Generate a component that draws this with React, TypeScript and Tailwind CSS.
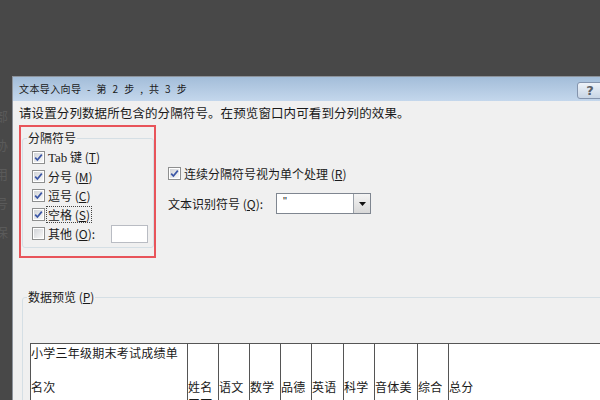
import React from "react";

function CB({ checked }: { checked: boolean }) {
  return (
    <span className="w-[13px] h-[13px] shrink-0 border border-[#8e8f8f] bg-white p-[1px] flex">
      <span className="flex-1 flex items-center justify-center bg-gradient-to-br from-[#d2d4d8] to-[#f8f8f8]">
        {checked && (
          <svg width="9" height="9" viewBox="0 0 9 9">
            <path d="M1.2 4.6 L3.4 7 L7.8 1.6" stroke="#3b56a6" strokeWidth="1.7" fill="none" />
          </svg>
        )}
      </span>
    </span>
  );
}

const cols: { w: string; lines: string[] }[] = [
  { w: "w-[157px]", lines: ["小学三年级期末考试成绩单", "", "名次", "1"] },
  { w: "w-[31px]", lines: ["", "", "姓名", "王丁"] },
  { w: "w-[31px]", lines: ["", "", "语文", "110"] },
  { w: "w-[31px]", lines: ["", "", "数学", "111"] },
  { w: "w-[31px]", lines: ["", "", "品德", "100"] },
  { w: "w-[32px]", lines: ["", "", "英语", "75"] },
  { w: "w-[31px]", lines: ["", "", "科学", "9"] },
  { w: "w-[43px]", lines: ["", "", "音体美", "98"] },
  { w: "w-[31px]", lines: ["", "", "综合", "47"] },
  { w: "w-[200px]", lines: ["", "", "总分", "770"] },
];

export default function App() {
  return (
    <div className="relative w-[600px] h-[400px] overflow-hidden bg-[#484848] font-['Noto_Sans_CJK_SC',sans-serif] text-[#1a1a1a]">
      {/* faint text behind the dialog */}
      <div className="absolute left-[-5px] top-[101px] flex flex-col text-[13px] leading-[29px] text-[#5a5a5a]">
        <span>部</span>
        <span>协</span>
        <span>用</span>
        <span>号</span>
        <span>保</span>
      </div>

      <div className="relative flex flex-col h-full pt-[76px] pl-[12px]">
        <div className="w-[610px] flex-1 flex flex-col bg-[#f0f0f0] border-t border-l border-[#8d939b]">
          {/* title bar */}
          <div className="h-[24px] flex items-start bg-gradient-to-b from-[#a3bdd9] to-[#c4d7ec]">
            <span className="pl-[6px] mt-[5px] text-[10px] leading-[14px] tracking-[0.4px] [word-spacing:3px] whitespace-pre text-[#1b1b1b]">
              文本导入向导 - 第 2 步 , 共 3 步
            </span>
            <div className="ml-auto mr-[19px] mt-[5px] w-[26px] h-[17px] rounded-[3px] border border-[#8494ad] bg-gradient-to-b from-[#eef3f9] to-[#c8d5e5] flex items-center justify-center">
              <span className="text-[13px] leading-[13px] font-bold text-[#5b5f66] font-['DejaVu_Sans',sans-serif]">?</span>
            </div>
          </div>

          {/* content */}
          <div className="flex flex-col px-[6px] pt-[4px]">
            <div className="h-[16px] text-[12.5px] leading-[16px] whitespace-nowrap tracking-[0.1px]">
              请设置分列数据所包含的分隔符号。在预览窗口内可看到分列的效果。
            </div>

            <div className="flex mt-[4px]">
              {/* red highlight box */}
              <div className="w-[137px] h-[133px] border-2 border-[#e8545a] flex flex-col">
                <fieldset className="ml-[1px] mt-[4px] h-[117px] border border-[#d5dfe5] rounded-[3px] text-[12px]">
                  <legend className="ml-[4px] px-[1px] leading-[14px]">分隔符号</legend>
                  <div className="pl-[9px] pt-[3px] flex flex-col">
                    <div className="h-[19px] flex items-center gap-[3px]">
                      <CB checked />
                      <span className="whitespace-pre">
                        <span className="font-['Liberation_Serif',serif] text-[13px]">Tab</span> 键 (<u>T</u>)
                      </span>
                    </div>
                    <div className="h-[19px] flex items-center gap-[3px]">
                      <CB checked />
                      <span className="whitespace-pre">分号 (<u>M</u>)</span>
                    </div>
                    <div className="h-[19px] flex items-center gap-[3px]">
                      <CB checked />
                      <span className="whitespace-pre">逗号 (<u>C</u>)</span>
                    </div>
                    <div className="h-[19px] flex items-center gap-[3px]">
                      <CB checked />
                      <span className="whitespace-pre -ml-[2px] px-[1px] border border-dotted border-[#444] leading-[15px]">空格 (<u>S</u>)</span>
                    </div>
                    <div className="h-[19px] flex items-center gap-[3px]">
                      <CB checked={false} />
                      <span className="whitespace-pre w-[60px]">其他 (<u>O</u>):</span>
                      <span className="w-[37px] h-[18px] bg-white border border-[#b9bcc3]" />
                    </div>
                  </div>
                </fieldset>
              </div>

              {/* right options */}
              <div className="ml-[12px] flex flex-col text-[12px]">
                <div className="mt-[39px] h-[19px] flex items-center gap-[3px]">
                  <CB checked />
                  <span className="whitespace-pre">连续分隔符号视为单个处理 (<u>R</u>)</span>
                </div>
                <div className="mt-[10px] h-[21px] flex items-center">
                  <span className="w-[108px] whitespace-pre">文本识别符号 (<u>Q</u>):</span>
                  <div className="w-[95px] h-[21px] bg-white border border-[#7f8690] flex">
                    <span className="flex-1 pl-[6px] pt-[1px] text-[11px] leading-[12px] text-[#222] font-['Liberation_Sans',sans-serif]">&quot;</span>
                    <div className="w-[17px] h-full border-l border-[#9aa0a8] bg-gradient-to-b from-[#f4f4f4] to-[#d8d8d8] flex items-center justify-center">
                      <svg width="7" height="4" viewBox="0 0 7 4">
                        <path d="M0 0 L7 0 L3.5 4 Z" fill="#111" />
                      </svg>
                    </div>
                  </div>
                </div>
              </div>
            </div>

            {/* data preview */}
            <fieldset className="ml-[3px] mt-[32px] h-[200px] border border-[#d5dfe5] rounded-[3px] text-[12px]">
              <legend className="ml-[4px] px-[1px] leading-[14px] whitespace-pre">数据预览 (<u>P</u>)</legend>
              <div className="pl-[7px] mt-[39px]">
                <div className="flex bg-white border-l border-t border-[#555] h-[100px]">
                  {cols.map((c, i) => (
                    <div key={i} className={`${c.w} shrink-0 border-r border-[#555] flex flex-col tracking-[0.25px]`}>
                      {c.lines.map((l, j) => (
                        <span key={j} className="h-[17px] leading-[17px] whitespace-nowrap">
                          {l}
                        </span>
                      ))}
                    </div>
                  ))}
                </div>
              </div>
            </fieldset>
          </div>
        </div>
      </div>
    </div>
  );
}
